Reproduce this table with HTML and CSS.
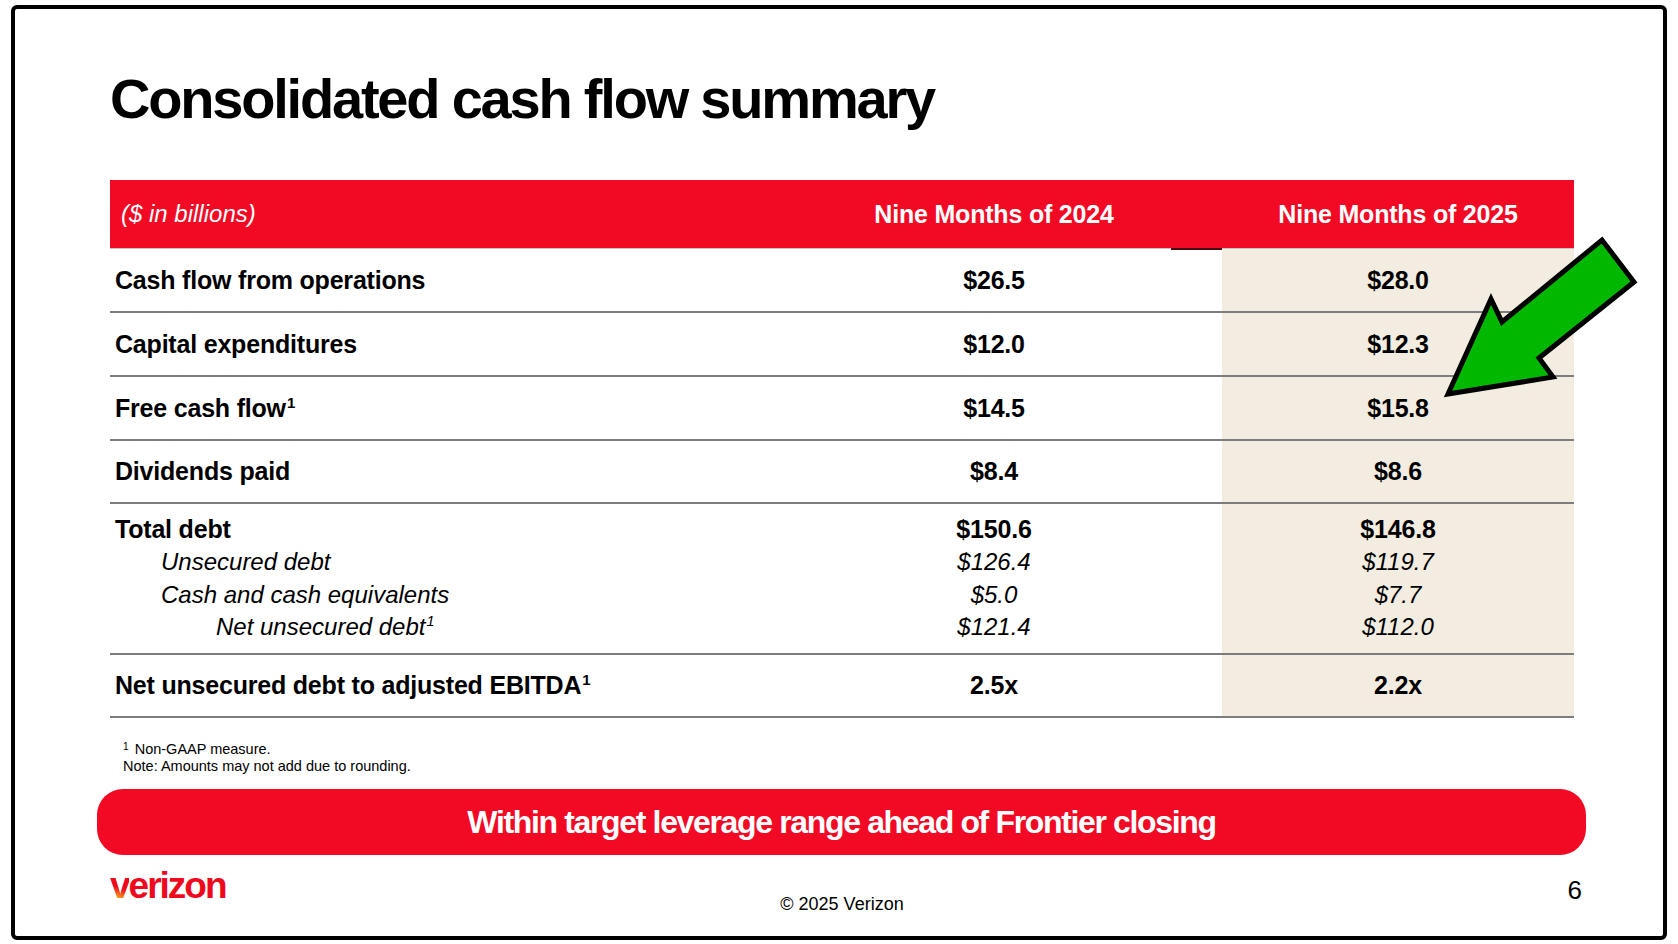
FILE: index.html
```html
<!DOCTYPE html>
<html>
<head>
<meta charset="utf-8">
<title>Consolidated cash flow summary</title>
<link rel="stylesheet" href="styles.css">
</head>
<body>
<div class="slide">
  <h1 class="title">Consolidated cash flow summary</h1>

  <div class="table">
    <div class="row head">
      <div class="cell label hlabel">($ in billions)</div>
      <div class="cell val mid">Nine Months of 2024</div>
      <div class="cell val">Nine Months of 2025</div>
    </div>
    <div class="row">
      <div class="cell label b">Cash flow from operations</div>
      <div class="cell val b">$26.5</div>
      <div class="cell val b hl">$28.0</div>
    </div>
    <div class="row">
      <div class="cell label b">Capital expenditures</div>
      <div class="cell val b">$12.0</div>
      <div class="cell val b hl">$12.3</div>
    </div>
    <div class="row">
      <div class="cell label b"><span>Free cash flow<sup class="fn">1</sup></span></div>
      <div class="cell val b">$14.5</div>
      <div class="cell val b hl">$15.8</div>
    </div>
    <div class="row r63">
      <div class="cell label b">Dividends paid</div>
      <div class="cell val b">$8.4</div>
      <div class="cell val b hl">$8.6</div>
    </div>
    <div class="row tall">
      <div class="cell label stack">
        <div class="b">Total debt</div>
        <div class="i ind1">Unsecured debt</div>
        <div class="i ind1">Cash and cash equivalents</div>
        <div class="i ind2">Net unsecured debt<sup class="fn">1</sup></div>
      </div>
      <div class="cell val stack">
        <div class="b">$150.6</div>
        <div class="i">$126.4</div>
        <div class="i">$5.0</div>
        <div class="i">$121.4</div>
      </div>
      <div class="cell val stack hl">
        <div class="b">$146.8</div>
        <div class="i">$119.7</div>
        <div class="i">$7.7</div>
        <div class="i">$112.0</div>
      </div>
    </div>
    <div class="row r63">
      <div class="cell label b"><span>Net unsecured debt to adjusted EBITDA<sup class="fn">1</sup></span></div>
      <div class="cell val b">2.5x</div>
      <div class="cell val b hl">2.2x</div>
    </div>
  </div>

  <div class="notes">
    <div><sup class="nfn">1</sup> Non-GAAP measure.</div>
    <div>Note: Amounts may not add due to rounding.</div>
  </div>

  <div class="banner">Within target leverage range ahead of Frontier closing</div>

  <div class="footer">
    <div class="logo"><span class="v">v</span>erizon</div>
    <div class="copy">© 2025 Verizon</div>
    <div class="page">6</div>
  </div>

  <svg class="arrow" width="230" height="190" viewBox="0 0 230 190" aria-hidden="true">
    <polygon points="18,174 61,79 72,102 172,20 204,62 109,138 123,157" fill="#00b800" stroke="#000" stroke-width="5" stroke-linejoin="miter"/>
  </svg>
</div>
</body>
</html>
```

FILE: styles.css
```css
body {
  margin: 0;
  background: #fff;
  font-family: "Liberation Sans", Arial, sans-serif;
  color: #000;
}

.slide {
  position: relative;
  box-sizing: border-box;
  width: 1656px;
  height: 935px;
  margin: 5px 0 0 11px;
  border: 4px solid #000;
  border-radius: 6px;
  padding: 58px 89px 0 95px;
  background: #fff;
}

.title {
  margin: 0;
  font-size: 56px;
  line-height: 64px;
  font-weight: 700;
  letter-spacing: -2.2px;
}

.table {
  margin-top: 49px;
}

.row {
  display: grid;
  grid-template-columns: 656px 456px 352px;
  height: 64px;
}

.row.r63 { height: 63px; }
.row.tall { height: 151px; }

.cell {
  box-sizing: border-box;
  display: flex;
  align-items: center;
  border-bottom: 2px solid #7d7d7d;
  font-size: 25px;
  letter-spacing: -0.2px;
}

.label { padding-left: 5px; }
.val { justify-content: center; }

.head {
  height: 69px;
  background: #f20a25;
  color: #fff;
}

.head .cell {
  border-bottom: 1px solid #c4c4c4;
  font-weight: 700;
}

.head .hlabel {
  padding-left: 11px;
  font-weight: 400;
  font-style: italic;
  font-size: 24px;
  letter-spacing: 0;
}

.head .mid { position: relative; }
.head .mid::after {
  content: "";
  position: absolute;
  right: 0;
  bottom: -2px;
  width: 51px;
  height: 2px;
  background: #4a0c10;
}

.hl { background: #f2ece1; }

.b { font-weight: 700; }
.i { font-style: italic; font-weight: 400; font-size: 24px; letter-spacing: 0; }

.stack {
  flex-direction: column;
  align-items: flex-start;
  justify-content: center;
  line-height: 32.6px;
}
.val.stack { align-items: center; }

.ind1 { padding-left: 46px; }
.ind2 { padding-left: 101px; }

.fn {
  font-size: 0.6em;
  vertical-align: 0.6em;
  line-height: 0;
  margin-left: 1px;
}

.notes {
  margin-top: 23px;
  padding-left: 13px;
  font-size: 14.5px;
  line-height: 17px;
}

.nfn {
  font-size: 0.7em;
  vertical-align: 0.4em;
  line-height: 0;
  margin-right: 2px;
}

.banner {
  margin: 14px -12px 0 -13px;
  height: 66px;
  border-radius: 26px;
  background: #f20a25;
  color: #fff;
  display: flex;
  align-items: center;
  justify-content: center;
  font-size: 32px;
  font-weight: 700;
  letter-spacing: -1.35px;
}

.footer {
  display: grid;
  grid-template-columns: 1fr auto 1fr;
  align-items: start;
  margin-top: 11px;
}

.logo {
  font-size: 37px;
  line-height: 40px;
  font-weight: 700;
  letter-spacing: -2px;
  color: #ee0a1c;
}

.logo .v {
  background: linear-gradient(200deg, #ee0a1c 55%, #f7941d 75%, #ffc20e 90%);
  -webkit-background-clip: text;
  background-clip: text;
  color: transparent;
}

.copy {
  margin-top: 27px;
  font-size: 18px;
  line-height: 22px;
}

.page {
  justify-self: end;
  margin-top: 9px;
  margin-right: -8px;
  font-size: 26px;
  line-height: 30px;
}

.arrow {
  position: absolute;
  left: 1415px;
  top: 211px;
}
```
